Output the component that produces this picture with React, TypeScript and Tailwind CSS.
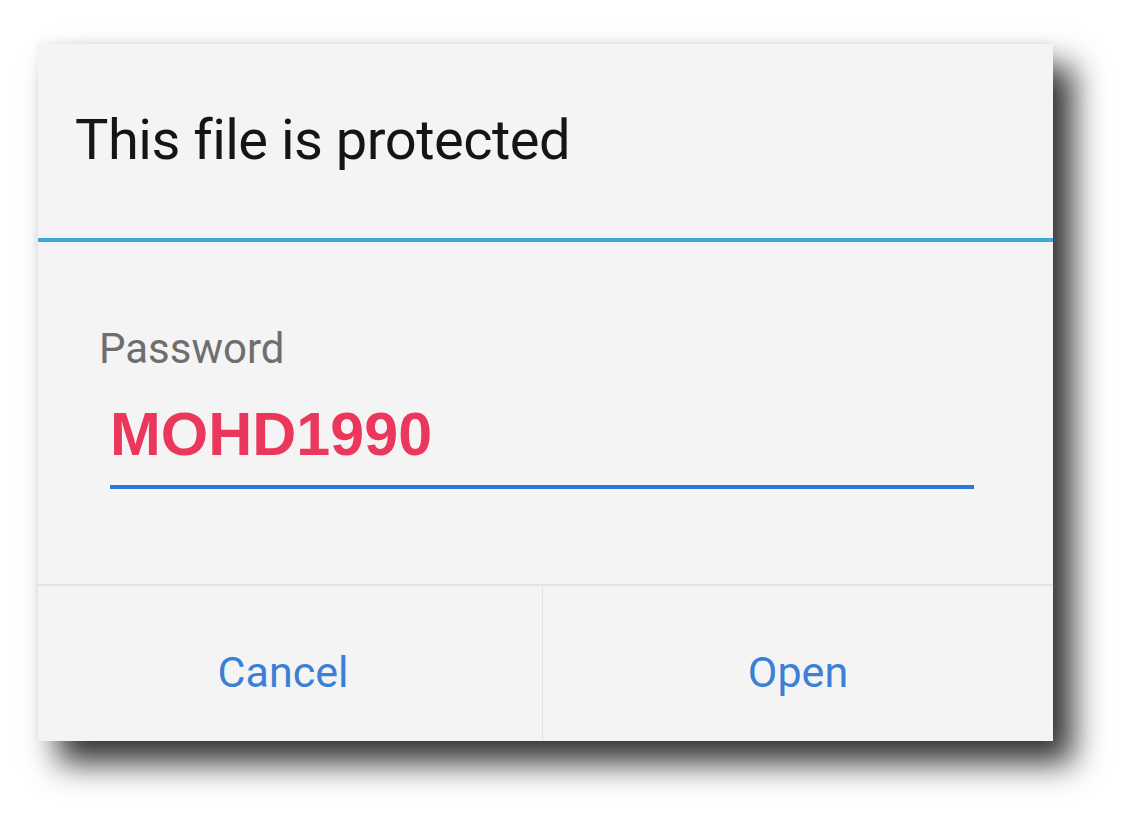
export default function App() {
  return (
    <div className="w-[1121px] h-[823px] bg-white pt-[44px] pl-[38px] overflow-hidden">
      <div
        className="w-[1015px] h-[697px] bg-[#f4f4f4] flex flex-col shadow-[20px_22px_30px_rgba(0,0,0,0.8),0_-2px_8px_rgba(0,0,0,0.06)]"
        style={{ fontFamily: "Roboto, 'Noto Sans', sans-serif" }}
      >
        <div className="h-[194px] flex items-center pl-[37px] pb-[2px]">
          <h1 className="text-[56px] tracking-[-0.5px] text-[#151515] leading-none">
            This file is protected
          </h1>
        </div>

        <div className="h-[4px] bg-[#3cabdc]" />

        <div className="flex-1 pl-[61px] pr-[79px] pt-[86px]">
          <p className="text-[42px] text-[#6e6e6e] leading-none">
            Password
          </p>
          <div className="pl-[11px] mt-[34px]">
            <p
              className="text-[61px] font-bold text-[#ea375b] leading-none"
              style={{ fontFamily: "'Liberation Sans', Arial, sans-serif" }}
            >
              MOHD1990
            </p>
            <div className="h-[4px] bg-[#2b78d8] mt-[20px]" />
          </div>
        </div>

        <div className="h-[2px] bg-[#e2e2e2]" />

        <div className="h-[155px] flex">
          <div className="w-[504px] flex items-center justify-center pt-[18px] pr-[14px]">
            <span className="text-[43px] leading-none text-[#3a80d6]">Cancel</span>
          </div>
          <div className="w-[1px] bg-[#e2e2e2]" />
          <div className="flex-1 flex items-center justify-center pt-[18px]">
            <span className="text-[43px] leading-none text-[#3a80d6]">Open</span>
          </div>
        </div>
      </div>
    </div>
  );
}
